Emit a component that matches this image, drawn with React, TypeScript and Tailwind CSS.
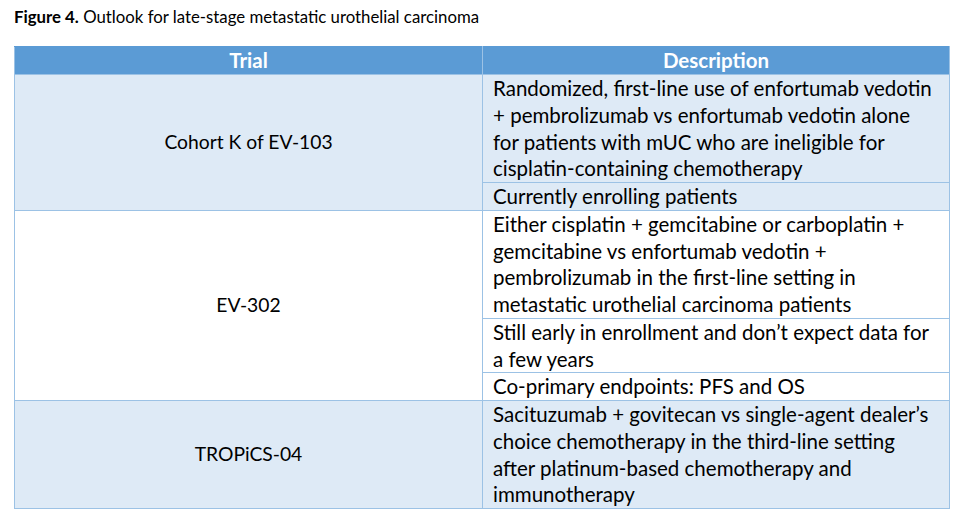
const rows = [
  {
    trial: 'Cohort K of EV-103',
    shade: true,
    cells: [
      [
        'Randomized, first-line use of enfortumab vedotin',
        '+ pembrolizumab vs enfortumab vedotin alone',
        'for patients with mUC who are ineligible for',
        'cisplatin-containing chemotherapy',
      ],
      ['Currently enrolling patients'],
    ],
  },
  {
    trial: 'EV-302',
    shade: false,
    cells: [
      [
        'Either cisplatin + gemcitabine or carboplatin +',
        'gemcitabine vs enfortumab vedotin +',
        'pembrolizumab in the first-line setting in',
        'metastatic urothelial carcinoma patients',
      ],
      ['Still early in enrollment and don\u2019t expect data for', 'a few years'],
      ['Co-primary endpoints: PFS and OS'],
    ],
  },
  {
    trial: 'TROPiCS-04',
    shade: true,
    cells: [
      [
        'Sacituzumab + govitecan vs single-agent dealer\u2019s',
        'choice chemotherapy in the third-line setting',
        'after platinum-based chemotherapy and',
        'immunotherapy',
      ],
    ],
  },
];

export default function App() {
  return (
    <div className="w-[961px] h-[527px] bg-white text-black font-['Lato','Liberation_Sans',sans-serif]">
      <p className="pl-[14px] pt-[6px] text-[16.8px] leading-[21px]">
        <span className="font-bold">Figure 4.</span> Outlook for late-stage metastatic urothelial carcinoma
      </p>

      <table className="ml-[14px] mt-[19px] w-[936px] border-collapse table-fixed text-[20.5px]">
        <thead>
          <tr className="bg-[#5b9bd5] text-white font-bold">
            <th className="w-[468px] border border-[#9cc2e5] border-t-[#5b9bd5] leading-[27px] p-0">Trial</th>
            <th className="border border-[#9cc2e5] border-t-[#5b9bd5] leading-[27px] p-0">Description</th>
          </tr>
        </thead>
        <tbody>
          {rows.map(row =>
            row.cells.map((lines, i) => (
              <tr key={row.trial + i} className={row.shade ? 'bg-[#deeaf6]' : 'bg-white'}>
                {i === 0 && (
                  <td
                    rowSpan={row.cells.length}
                    className="border border-[#9cc2e5] text-center align-middle text-[19.3px] leading-[26.75px] p-0"
                  >
                    {row.trial}
                  </td>
                )}
                <td className="border border-[#9cc2e5] pl-[10px] py-0 leading-[26.75px] align-top">
                  {lines.map(l => (
                    <div key={l} className="whitespace-nowrap">{l}</div>
                  ))}
                </td>
              </tr>
            ))
          )}
        </tbody>
      </table>
    </div>
  );
}
